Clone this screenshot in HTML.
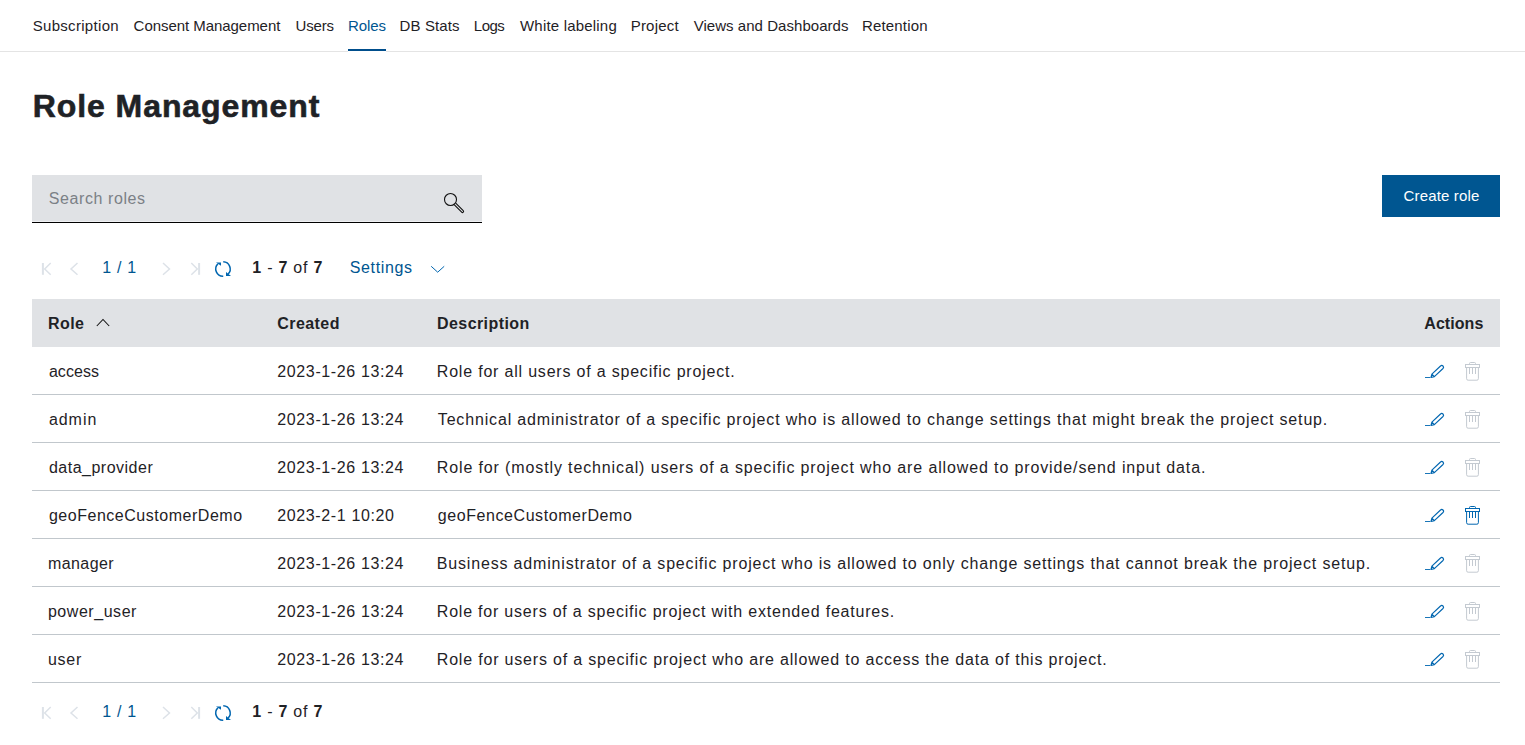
<!DOCTYPE html>
<html><head><meta charset="utf-8"><title>Role Management</title>
<style>
html,body{margin:0;padding:0;background:#fff;width:1525px;height:745px;overflow:hidden;position:relative}
body{font-family:"Liberation Sans",sans-serif;color:#1f2226}
.t{position:absolute;white-space:pre;line-height:normal}
.t b{font-weight:700}
.ic{position:absolute;overflow:visible}
.navline{position:absolute;left:0;top:51px;width:1525px;height:1px;background:#e4e4e4}
.tabul{position:absolute;left:348px;top:49px;width:38px;height:2px;background:#004e8c;border-bottom:1px solid #fff}
.search{position:absolute;left:32px;top:175px;width:450px;height:46px;background:#e0e2e5;border-bottom:1px solid #eff0f3}
.searchul{position:absolute;left:32px;top:222px;width:450px;height:1px;background:#000}
.btn{position:absolute;left:1382px;top:175px;width:118px;height:42px;background:#005691}
.thead{position:absolute;left:32px;top:299px;width:1468px;height:48px;background:#e0e2e5}
.rl{position:absolute;left:32px;width:1468px;height:1px;background:#c1c7cc}
</style></head><body>
<div class="navline"></div>
<div class="tabul"></div>
<div class="search"></div><div class="searchul"></div>
<div class="btn"></div>
<div class="thead"></div>
<div class="rl" style="top:394px"></div>
<div class="rl" style="top:442px"></div>
<div class="rl" style="top:490px"></div>
<div class="rl" style="top:538px"></div>
<div class="rl" style="top:586px"></div>
<div class="rl" style="top:634px"></div>
<div class="rl" style="top:682px"></div>
<div class="t" style="left:32.70px;top:17px;font-size:15px;letter-spacing:0.309px;color:#1f2226;">Subscription</div>
<div class="t" style="left:133.60px;top:17px;font-size:15px;letter-spacing:-0.048px;color:#1f2226;">Consent Management</div>
<div class="t" style="left:295.50px;top:17px;font-size:15px;letter-spacing:-0.167px;color:#1f2226;">Users</div>
<div class="t" style="left:347.90px;top:17px;font-size:15px;letter-spacing:-0.037px;color:#005691;">Roles</div>
<div class="t" style="left:399.60px;top:17px;font-size:15px;letter-spacing:0.102px;color:#1f2226;">DB Stats</div>
<div class="t" style="left:473.80px;top:17px;font-size:15px;letter-spacing:-0.509px;color:#1f2226;">Logs</div>
<div class="t" style="left:520.00px;top:17px;font-size:15px;letter-spacing:0.194px;color:#1f2226;">White labeling</div>
<div class="t" style="left:630.70px;top:17px;font-size:15px;letter-spacing:0.214px;color:#1f2226;">Project</div>
<div class="t" style="left:693.70px;top:17px;font-size:15px;letter-spacing:0.043px;color:#1f2226;">Views and Dashboards</div>
<div class="t" style="left:861.90px;top:17px;font-size:15px;letter-spacing:0.191px;color:#1f2226;">Retention</div>
<div class="t" style="left:32.80px;top:88px;font-size:32px;letter-spacing:0.916px;color:#1f2226;-webkit-text-stroke:0.6px #1f2226"><b>Role Management</b></div>
<div class="t" style="left:48.80px;top:190px;font-size:16px;letter-spacing:0.580px;color:#7b8086;">Search roles</div>
<div class="t" style="left:1403.50px;top:187px;font-size:15px;letter-spacing:0.164px;color:#ffffff;">Create role</div>
<div class="t" style="left:102.20px;top:259px;font-size:16px;letter-spacing:0.691px;color:#005691;">1 / 1</div>
<div class="t" style="left:252.30px;top:259px;font-size:16px;letter-spacing:0.761px;color:#1f2226;"><b>1</b> - <b>7</b> of <b>7</b></div>
<div class="t" style="left:102.20px;top:703px;font-size:16px;letter-spacing:0.691px;color:#005691;">1 / 1</div>
<div class="t" style="left:252.30px;top:703px;font-size:16px;letter-spacing:0.761px;color:#1f2226;"><b>1</b> - <b>7</b> of <b>7</b></div>
<div class="t" style="left:349.80px;top:259px;font-size:16px;letter-spacing:0.627px;color:#005691;">Settings</div>
<div class="t" style="left:47.90px;top:315px;font-size:16px;letter-spacing:0.476px;color:#1f2226;"><b>Role</b></div>
<div class="t" style="left:277.30px;top:315px;font-size:16px;letter-spacing:0.433px;color:#1f2226;"><b>Created</b></div>
<div class="t" style="left:437.00px;top:315px;font-size:16px;letter-spacing:0.426px;color:#1f2226;"><b>Description</b></div>
<div class="t" style="left:1424.30px;top:315px;font-size:16px;letter-spacing:0.054px;color:#1f2226;"><b>Actions</b></div>
<div class="t" style="left:48.90px;top:363px;font-size:16px;letter-spacing:0.061px;color:#1f2226;">access</div>
<div class="t" style="left:277.30px;top:363px;font-size:16px;letter-spacing:0.626px;color:#1f2226;">2023-1-26 13:24</div>
<div class="t" style="left:436.80px;top:363px;font-size:16px;letter-spacing:0.801px;color:#1f2226;">Role for all users of a specific project.</div>
<div class="t" style="left:48.90px;top:411px;font-size:16px;letter-spacing:0.955px;color:#1f2226;">admin</div>
<div class="t" style="left:277.30px;top:411px;font-size:16px;letter-spacing:0.626px;color:#1f2226;">2023-1-26 13:24</div>
<div class="t" style="left:437.80px;top:411px;font-size:16px;letter-spacing:0.836px;color:#1f2226;">Technical administrator of a specific project who is allowed to change settings that might break the project setup.</div>
<div class="t" style="left:48.90px;top:459px;font-size:16px;letter-spacing:0.499px;color:#1f2226;">data_provider</div>
<div class="t" style="left:277.30px;top:459px;font-size:16px;letter-spacing:0.626px;color:#1f2226;">2023-1-26 13:24</div>
<div class="t" style="left:436.80px;top:459px;font-size:16px;letter-spacing:0.873px;color:#1f2226;">Role for (mostly technical) users of a specific project who are allowed to provide/send input data.</div>
<div class="t" style="left:48.90px;top:507px;font-size:16px;letter-spacing:0.526px;color:#1f2226;">geoFenceCustomerDemo</div>
<div class="t" style="left:277.30px;top:507px;font-size:16px;letter-spacing:0.621px;color:#1f2226;">2023-2-1 10:20</div>
<div class="t" style="left:437.80px;top:507px;font-size:16px;letter-spacing:0.569px;color:#1f2226;">geoFenceCustomerDemo</div>
<div class="t" style="left:47.90px;top:555px;font-size:16px;letter-spacing:0.430px;color:#1f2226;">manager</div>
<div class="t" style="left:277.30px;top:555px;font-size:16px;letter-spacing:0.626px;color:#1f2226;">2023-1-26 13:24</div>
<div class="t" style="left:436.80px;top:555px;font-size:16px;letter-spacing:0.825px;color:#1f2226;">Business administrator of a specific project who is allowed to only change settings that cannot break the project setup.</div>
<div class="t" style="left:47.90px;top:603px;font-size:16px;letter-spacing:0.547px;color:#1f2226;">power_user</div>
<div class="t" style="left:277.30px;top:603px;font-size:16px;letter-spacing:0.626px;color:#1f2226;">2023-1-26 13:24</div>
<div class="t" style="left:436.80px;top:603px;font-size:16px;letter-spacing:0.789px;color:#1f2226;">Role for users of a specific project with extended features.</div>
<div class="t" style="left:47.90px;top:651px;font-size:16px;letter-spacing:0.768px;color:#1f2226;">user</div>
<div class="t" style="left:277.30px;top:651px;font-size:16px;letter-spacing:0.626px;color:#1f2226;">2023-1-26 13:24</div>
<div class="t" style="left:436.80px;top:651px;font-size:16px;letter-spacing:0.810px;color:#1f2226;">Role for users of a specific project who are allowed to access the data of this project.</div>
<svg class="ic" style="left:40px;top:262px" width="14" height="14" viewBox="0 0 14 14">
<path d="M2.9 1 V12.8" stroke="#dde2e8" stroke-width="2" fill="none"/>
<path d="M10.7 1 L4.7 7 L10.7 12.8" stroke="#dde2e8" stroke-width="1.5" fill="none"/>
</svg>
<svg class="ic" style="left:68px;top:262px" width="12" height="14" viewBox="0 0 12 14">
<path d="M9.5 1 L3 7 L9.5 12.8" stroke="#dde2e8" stroke-width="1.5" fill="none"/>
</svg>
<svg class="ic" style="left:161px;top:262px" width="12" height="14" viewBox="0 0 12 14">
<path d="M2 1 L8.5 7 L2 12.8" stroke="#dde2e8" stroke-width="1.5" fill="none"/>
</svg>
<svg class="ic" style="left:188px;top:262px" width="14" height="14" viewBox="0 0 14 14">
<path d="M11.1 1 V12.8" stroke="#dde2e8" stroke-width="2" fill="none"/>
<path d="M3.3 1 L9.3 7 L3.3 12.8" stroke="#dde2e8" stroke-width="1.5" fill="none"/>
</svg>
<svg class="ic" style="left:213px;top:260px" width="20" height="18" viewBox="0 0 20 18">
<path d="M4.9 3.9 A7.2 7.2 0 0 0 10.25 16.2" stroke="#0066b0" stroke-width="1.5" fill="none"/>
<path d="M10.25 1.8 A7.2 7.2 0 0 1 15.09 14.09" stroke="#0066b0" stroke-width="1.5" fill="none"/>
<path d="M3 2.6 H8 V5.8 Z" fill="#0066b0"/>
<path d="M13 12 V16 H18 Z" fill="#0066b0"/>
</svg><svg class="ic" style="left:40px;top:706px" width="14" height="14" viewBox="0 0 14 14">
<path d="M2.9 1 V12.8" stroke="#dde2e8" stroke-width="2" fill="none"/>
<path d="M10.7 1 L4.7 7 L10.7 12.8" stroke="#dde2e8" stroke-width="1.5" fill="none"/>
</svg>
<svg class="ic" style="left:68px;top:706px" width="12" height="14" viewBox="0 0 12 14">
<path d="M9.5 1 L3 7 L9.5 12.8" stroke="#dde2e8" stroke-width="1.5" fill="none"/>
</svg>
<svg class="ic" style="left:161px;top:706px" width="12" height="14" viewBox="0 0 12 14">
<path d="M2 1 L8.5 7 L2 12.8" stroke="#dde2e8" stroke-width="1.5" fill="none"/>
</svg>
<svg class="ic" style="left:188px;top:706px" width="14" height="14" viewBox="0 0 14 14">
<path d="M11.1 1 V12.8" stroke="#dde2e8" stroke-width="2" fill="none"/>
<path d="M3.3 1 L9.3 7 L3.3 12.8" stroke="#dde2e8" stroke-width="1.5" fill="none"/>
</svg>
<svg class="ic" style="left:213px;top:704px" width="20" height="18" viewBox="0 0 20 18">
<path d="M4.9 3.9 A7.2 7.2 0 0 0 10.25 16.2" stroke="#0066b0" stroke-width="1.5" fill="none"/>
<path d="M10.25 1.8 A7.2 7.2 0 0 1 15.09 14.09" stroke="#0066b0" stroke-width="1.5" fill="none"/>
<path d="M3 2.6 H8 V5.8 Z" fill="#0066b0"/>
<path d="M13 12 V16 H18 Z" fill="#0066b0"/>
</svg><svg class="ic" style="left:430px;top:265px" width="16" height="9" viewBox="0 0 16 9">
<path d="M1.2 1.3 L7.7 7.2 L14.2 1.3" stroke="#0066b0" stroke-width="1" fill="none"/></svg><svg class="ic" style="left:96px;top:318px" width="14" height="9" viewBox="0 0 14 9">
<path d="M0.8 8 L7 1.5 L13.2 8" stroke="#111" stroke-width="1.05" fill="none"/></svg><svg class="ic" style="left:442px;top:192px" width="24" height="23" viewBox="0 0 24 23">
<circle cx="8.5" cy="7.5" r="6" stroke="#111" stroke-width="1.1" fill="none"/>
<path d="M13.73 11.17 L21.23 18.67 A1.1 1.1 0 0 1 19.67 20.23 L12.17 12.73" stroke="#111" stroke-width="1.1" fill="none"/>
</svg><svg class="ic" style="left:1424px;top:363px" width="22" height="16" viewBox="0 0 22 16">
<path d="M1 14.5H6.2" stroke="#0066b0" stroke-width="0.9" fill="none"/>
<path d="M7 14.5 L7.88 11.14 L16.51 3.01 A1.75 1.75 0 0 1 18.99 5.49 L10.36 13.62 Z M7.88 11.14 L10.36 13.62" stroke="#0066b0" stroke-width="1.15" fill="none" stroke-linejoin="round"/>
</svg><svg class="ic" style="left:1464px;top:361px" width="18" height="21" viewBox="0 0 18 21">
<path d="M5.5 3.2 V2.5 a1 1 0 0 1 1 -1 H10.5 a1 1 0 0 1 1 1 V3.2" stroke="#c4cad1" stroke-width="1" fill="none"/>
<rect x="1.5" y="3.5" width="14" height="3" stroke="#c4cad1" stroke-width="1" fill="none"/>
<path d="M2.6 7 V17.7 a1.5 1.5 0 0 0 1.5 1.5 H12.9 a1.5 1.5 0 0 0 1.5 -1.5 V7" stroke="#c4cad1" stroke-width="1" fill="none"/>
<path d="M5.5 7 V13 M8.5 7 V13 M11.5 7 V13" stroke="#c4cad1" stroke-width="1" fill="none"/>
</svg><svg class="ic" style="left:1424px;top:411px" width="22" height="16" viewBox="0 0 22 16">
<path d="M1 14.5H6.2" stroke="#0066b0" stroke-width="0.9" fill="none"/>
<path d="M7 14.5 L7.88 11.14 L16.51 3.01 A1.75 1.75 0 0 1 18.99 5.49 L10.36 13.62 Z M7.88 11.14 L10.36 13.62" stroke="#0066b0" stroke-width="1.15" fill="none" stroke-linejoin="round"/>
</svg><svg class="ic" style="left:1464px;top:409px" width="18" height="21" viewBox="0 0 18 21">
<path d="M5.5 3.2 V2.5 a1 1 0 0 1 1 -1 H10.5 a1 1 0 0 1 1 1 V3.2" stroke="#c4cad1" stroke-width="1" fill="none"/>
<rect x="1.5" y="3.5" width="14" height="3" stroke="#c4cad1" stroke-width="1" fill="none"/>
<path d="M2.6 7 V17.7 a1.5 1.5 0 0 0 1.5 1.5 H12.9 a1.5 1.5 0 0 0 1.5 -1.5 V7" stroke="#c4cad1" stroke-width="1" fill="none"/>
<path d="M5.5 7 V13 M8.5 7 V13 M11.5 7 V13" stroke="#c4cad1" stroke-width="1" fill="none"/>
</svg><svg class="ic" style="left:1424px;top:459px" width="22" height="16" viewBox="0 0 22 16">
<path d="M1 14.5H6.2" stroke="#0066b0" stroke-width="0.9" fill="none"/>
<path d="M7 14.5 L7.88 11.14 L16.51 3.01 A1.75 1.75 0 0 1 18.99 5.49 L10.36 13.62 Z M7.88 11.14 L10.36 13.62" stroke="#0066b0" stroke-width="1.15" fill="none" stroke-linejoin="round"/>
</svg><svg class="ic" style="left:1464px;top:457px" width="18" height="21" viewBox="0 0 18 21">
<path d="M5.5 3.2 V2.5 a1 1 0 0 1 1 -1 H10.5 a1 1 0 0 1 1 1 V3.2" stroke="#c4cad1" stroke-width="1" fill="none"/>
<rect x="1.5" y="3.5" width="14" height="3" stroke="#c4cad1" stroke-width="1" fill="none"/>
<path d="M2.6 7 V17.7 a1.5 1.5 0 0 0 1.5 1.5 H12.9 a1.5 1.5 0 0 0 1.5 -1.5 V7" stroke="#c4cad1" stroke-width="1" fill="none"/>
<path d="M5.5 7 V13 M8.5 7 V13 M11.5 7 V13" stroke="#c4cad1" stroke-width="1" fill="none"/>
</svg><svg class="ic" style="left:1424px;top:507px" width="22" height="16" viewBox="0 0 22 16">
<path d="M1 14.5H6.2" stroke="#0066b0" stroke-width="0.9" fill="none"/>
<path d="M7 14.5 L7.88 11.14 L16.51 3.01 A1.75 1.75 0 0 1 18.99 5.49 L10.36 13.62 Z M7.88 11.14 L10.36 13.62" stroke="#0066b0" stroke-width="1.15" fill="none" stroke-linejoin="round"/>
</svg><svg class="ic" style="left:1464px;top:505px" width="18" height="21" viewBox="0 0 18 21">
<path d="M5.5 3.2 V2.5 a1 1 0 0 1 1 -1 H10.5 a1 1 0 0 1 1 1 V3.2" stroke="#0066b0" stroke-width="1" fill="none"/>
<rect x="1.5" y="3.5" width="14" height="3" stroke="#0066b0" stroke-width="1" fill="none"/>
<path d="M2.6 7 V17.7 a1.5 1.5 0 0 0 1.5 1.5 H12.9 a1.5 1.5 0 0 0 1.5 -1.5 V7" stroke="#0066b0" stroke-width="1" fill="none"/>
<path d="M5.5 7 V13 M8.5 7 V13 M11.5 7 V13" stroke="#0066b0" stroke-width="1" fill="none"/>
</svg><svg class="ic" style="left:1424px;top:555px" width="22" height="16" viewBox="0 0 22 16">
<path d="M1 14.5H6.2" stroke="#0066b0" stroke-width="0.9" fill="none"/>
<path d="M7 14.5 L7.88 11.14 L16.51 3.01 A1.75 1.75 0 0 1 18.99 5.49 L10.36 13.62 Z M7.88 11.14 L10.36 13.62" stroke="#0066b0" stroke-width="1.15" fill="none" stroke-linejoin="round"/>
</svg><svg class="ic" style="left:1464px;top:553px" width="18" height="21" viewBox="0 0 18 21">
<path d="M5.5 3.2 V2.5 a1 1 0 0 1 1 -1 H10.5 a1 1 0 0 1 1 1 V3.2" stroke="#c4cad1" stroke-width="1" fill="none"/>
<rect x="1.5" y="3.5" width="14" height="3" stroke="#c4cad1" stroke-width="1" fill="none"/>
<path d="M2.6 7 V17.7 a1.5 1.5 0 0 0 1.5 1.5 H12.9 a1.5 1.5 0 0 0 1.5 -1.5 V7" stroke="#c4cad1" stroke-width="1" fill="none"/>
<path d="M5.5 7 V13 M8.5 7 V13 M11.5 7 V13" stroke="#c4cad1" stroke-width="1" fill="none"/>
</svg><svg class="ic" style="left:1424px;top:603px" width="22" height="16" viewBox="0 0 22 16">
<path d="M1 14.5H6.2" stroke="#0066b0" stroke-width="0.9" fill="none"/>
<path d="M7 14.5 L7.88 11.14 L16.51 3.01 A1.75 1.75 0 0 1 18.99 5.49 L10.36 13.62 Z M7.88 11.14 L10.36 13.62" stroke="#0066b0" stroke-width="1.15" fill="none" stroke-linejoin="round"/>
</svg><svg class="ic" style="left:1464px;top:601px" width="18" height="21" viewBox="0 0 18 21">
<path d="M5.5 3.2 V2.5 a1 1 0 0 1 1 -1 H10.5 a1 1 0 0 1 1 1 V3.2" stroke="#c4cad1" stroke-width="1" fill="none"/>
<rect x="1.5" y="3.5" width="14" height="3" stroke="#c4cad1" stroke-width="1" fill="none"/>
<path d="M2.6 7 V17.7 a1.5 1.5 0 0 0 1.5 1.5 H12.9 a1.5 1.5 0 0 0 1.5 -1.5 V7" stroke="#c4cad1" stroke-width="1" fill="none"/>
<path d="M5.5 7 V13 M8.5 7 V13 M11.5 7 V13" stroke="#c4cad1" stroke-width="1" fill="none"/>
</svg><svg class="ic" style="left:1424px;top:651px" width="22" height="16" viewBox="0 0 22 16">
<path d="M1 14.5H6.2" stroke="#0066b0" stroke-width="0.9" fill="none"/>
<path d="M7 14.5 L7.88 11.14 L16.51 3.01 A1.75 1.75 0 0 1 18.99 5.49 L10.36 13.62 Z M7.88 11.14 L10.36 13.62" stroke="#0066b0" stroke-width="1.15" fill="none" stroke-linejoin="round"/>
</svg><svg class="ic" style="left:1464px;top:649px" width="18" height="21" viewBox="0 0 18 21">
<path d="M5.5 3.2 V2.5 a1 1 0 0 1 1 -1 H10.5 a1 1 0 0 1 1 1 V3.2" stroke="#c4cad1" stroke-width="1" fill="none"/>
<rect x="1.5" y="3.5" width="14" height="3" stroke="#c4cad1" stroke-width="1" fill="none"/>
<path d="M2.6 7 V17.7 a1.5 1.5 0 0 0 1.5 1.5 H12.9 a1.5 1.5 0 0 0 1.5 -1.5 V7" stroke="#c4cad1" stroke-width="1" fill="none"/>
<path d="M5.5 7 V13 M8.5 7 V13 M11.5 7 V13" stroke="#c4cad1" stroke-width="1" fill="none"/>
</svg>
</body></html>
